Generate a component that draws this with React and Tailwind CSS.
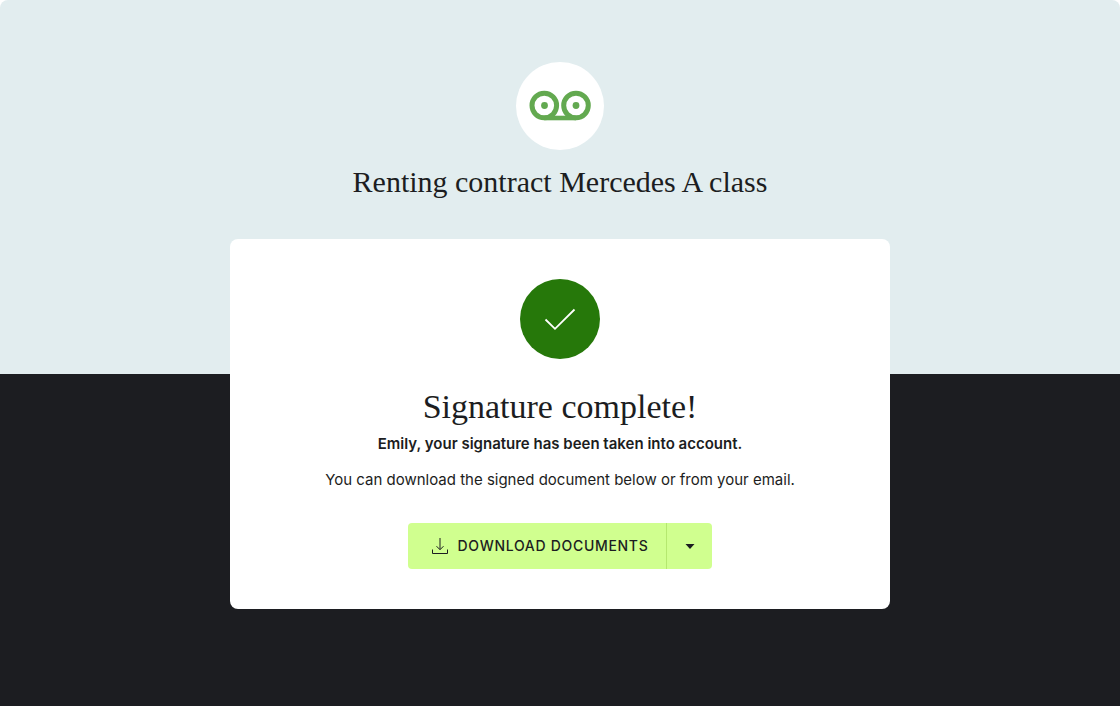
function BrandMark() {
  return (
    <svg className="h-8 w-16" viewBox="0 0 64 32" fill="none" aria-hidden="true">
      <circle cx="16.3" cy="15.5" r="12.3" stroke="#63a950" strokeWidth="5" />
      <circle cx="48" cy="15.5" r="12.3" stroke="#63a950" strokeWidth="5" />
      <circle cx="16.5" cy="15.5" r="3.4" fill="#63a950" />
      <circle cx="48" cy="15.5" r="3.4" fill="#63a950" />
      <path d="M16.3 28H48" stroke="#63a950" strokeWidth="4.6" />
    </svg>
  );
}

function CheckIcon() {
  return (
    <svg className="h-10 w-10" viewBox="0 0 40 40" fill="none" aria-hidden="true">
      <path d="M5.5 20.5L15 29.8L34.5 10.5" stroke="#fff" strokeWidth="1.8" />
    </svg>
  );
}

function DownloadIcon() {
  return (
    <svg className="h-4 w-4 shrink-0" viewBox="0 0 16 16" fill="none" stroke="#1c1d21" aria-hidden="true">
      <path d="M8 0V11.5M4.500 8.200L8 11.700L11.500 8.200M0.500 11.500V15.500H15.500V11.500" />
    </svg>
  );
}

export default function App() {
  return (
    <main className="min-h-screen bg-[#1c1d21] pb-24 text-center font-['Inter','Liberation_Sans',sans-serif] text-[#1c1d21]">
      <div className="bg-white">
        <header className="flex flex-col items-center rounded-t-lg bg-[#e2edef] px-4 pt-[62px] pb-[172px]">
          <div className="flex h-[88px] w-[88px] items-center justify-center rounded-full bg-white">
            <BrandMark />
          </div>
          <h1 className="mt-3 font-['Liberation_Serif',serif] text-[30px] leading-10">
            Renting contract Mercedes A class
          </h1>
        </header>
      </div>
      <section className="mx-auto -mt-[135px] flex w-full max-w-[660px] flex-col items-center rounded-lg bg-white px-6 py-10">
        <div className="flex h-20 w-20 items-center justify-center rounded-full bg-[#26780a]">
          <CheckIcon />
        </div>
        <h2 className="mt-7 font-['Liberation_Serif',serif] text-[34px] leading-10">Signature complete!</h2>
        <p className="mt-[5px] text-[15px] leading-6 font-semibold">
          Emily, your signature has been taken into account.
        </p>
        <p className="mt-3 text-[15px] leading-6">
          You can download the signed document below or from your email.
        </p>
        <div className="mt-[31px] flex h-[46px] overflow-hidden rounded-sm bg-[#d0ff8f]">
          <button type="button" className="flex items-center gap-2.5 pr-[18px] pl-6 text-sm font-medium tracking-wider">
            <DownloadIcon />
            DOWNLOAD DOCUMENTS
          </button>
          <button
            type="button"
            aria-label="More download options"
            className="flex w-[46px] items-center justify-center border-l border-[#b5e86f]"
          >
            <svg className="h-[5px] w-2.5" viewBox="0 0 10 5" fill="#1c1d21" aria-hidden="true">
              <path d="M0.500 0H9.500L5 5Z" />
            </svg>
          </button>
        </div>
      </section>
    </main>
  );
}
